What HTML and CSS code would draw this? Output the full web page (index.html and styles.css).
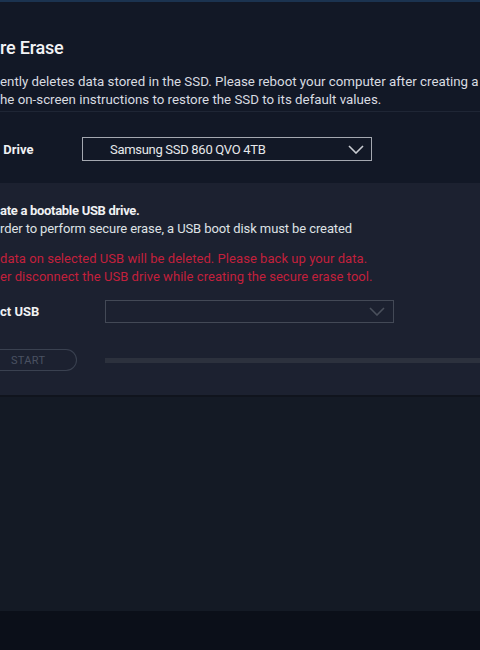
FILE: index.html
```html
<!DOCTYPE html>
<html>
<head>
<meta charset="utf-8">
<link rel="stylesheet" href="styles.css">
</head>
<body>
<div class="app">
  <section class="top">
    <h1 class="title">re Erase</h1>
    <p class="desc">ently deletes data stored in the SSD. Please reboot your computer after creating a<br>he on-screen instructions to restore the SSD to its default values.</p>
    <div class="divider"></div>
    <div class="row drive-row">
      <span class="label">&nbsp;Drive</span>
      <div class="select select-drive">
        <span class="select-text">Samsung SSD 860 QVO 4TB</span>
        <svg class="chev" width="16" height="9" viewBox="0 0 16 9"><path d="M1 1 L8 8 L15 1" fill="none" stroke="#c9ccd2" stroke-width="1.6"/></svg>
      </div>
    </div>
  </section>
  <section class="panel">
    <h2 class="step">ate a bootable USB drive.</h2>
    <p class="sub">rder to perform secure erase, a USB boot disk must be created</p>
    <p class="warn">data on selected USB will be deleted. Please back up your data.<br>er disconnect the USB drive while creating the secure erase tool.</p>
    <div class="row usb-row">
      <span class="label">ct USB</span>
      <div class="select select-usb">
        <svg class="chev" width="16" height="9" viewBox="0 0 16 9"><path d="M1 1 L8 8 L15 1" fill="none" stroke="#4a505c" stroke-width="1.6"/></svg>
      </div>
    </div>
    <div class="row action-row">
      <button class="start">START</button>
      <div class="progress"></div>
    </div>
  </section>
  <section class="lower"></section>
  <footer class="footer"></footer>
</div>
</body>
</html>
```
FILE: styles.css
```css
* { box-sizing: border-box; }
html, body {
  margin: 0;
  padding: 0;
  background: #141a25;
}
body {
  width: 480px;
  height: 650px;
  overflow: hidden;
  font-family: Roboto, "Noto Sans", sans-serif;
  color: #e2e4e8;
}
.app {
  display: flex;
  flex-direction: column;
  height: 650px;
}
.top {
  height: 183px;
  background: #121826;
  border-top: 2px solid #1b3350;
  display: flex;
  flex-direction: column;
}
.title {
  margin: 34px 0 0 0;
  font-size: 18px;
  font-weight: 500;
  line-height: 24px;
  color: #f2f3f5;
  letter-spacing: -0.2px;
}
.desc {
  margin: 13px 0 0 0;
  font-size: 13.3px;
  line-height: 18px;
  letter-spacing: 0;
  color: #d9dce1;
}
.divider {
  height: 1px;
  background: #1f2635;
  margin-top: 2px;
}
.row {
  display: flex;
  align-items: center;
}
.label {
  font-size: 13px;
  font-weight: 700;
  color: #f0f1f3;
  white-space: pre;
}
.drive-row {
  margin-top: 25px;
}
.drive-row .label {
  width: 82px;
}
.select {
  display: flex;
  align-items: center;
  justify-content: space-between;
}
.select-drive {
  width: 290px;
  height: 24px;
  border: 1.5px solid #a4a8b0;
  padding: 0 7px 0 27px;
}
.select-text {
  font-size: 13px;
  color: #e6e8eb;
  letter-spacing: -0.3px;
}
.panel {
  height: 214px;
  background: #1c2130;
  border-bottom: 2px solid #10141d;
  display: flex;
  flex-direction: column;
}
.step {
  margin: 19px 0 0 0;
  font-size: 13px;
  font-weight: 700;
  line-height: 18px;
  color: #f0f1f3;
  letter-spacing: -0.3px;
}
.sub {
  margin: 0;
  font-size: 13px;
  line-height: 18px;
  color: #dfe1e5;
  letter-spacing: -0.1px;
}
.warn {
  margin: 12px 0 0 0;
  font-size: 13px;
  line-height: 18px;
  color: #c3203c;
  letter-spacing: 0.05px;
}
.usb-row {
  margin-top: 14px;
}
.usb-row .label {
  width: 105px;
}
.select-usb {
  width: 289px;
  height: 23px;
  border: 1.5px solid #434956;
  padding: 0 8px;
  justify-content: flex-end;
}
.action-row {
  margin-top: 26px;
}
.start {
  width: 77px;
  height: 22px;
  margin-left: 0;
  border: 1.5px solid #3a4150;
  border-left: none;
  border-radius: 0 11px 11px 0;
  background: transparent;
  color: #4a5162;
  font-family: Roboto, sans-serif;
  font-size: 11px;
  letter-spacing: 0.3px;
  text-align: left;
  padding: 0 0 0 11px;
}
.progress {
  margin-left: 28px;
  flex: 1;
  height: 5px;
  background: #2c313d;
}
.lower {
  flex: 1;
  background: #141a25;
}
.footer {
  height: 39px;
  background: #0b0f19;
}
```
